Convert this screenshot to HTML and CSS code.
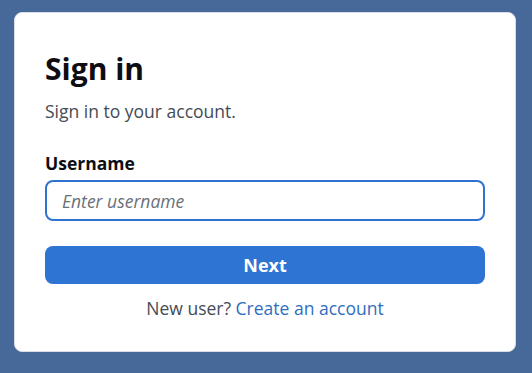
FILE: index.html
```html
<!DOCTYPE html>
<html lang="en">
<head>
    <meta charset="UTF-8">
    <meta name="viewport" content="width=device-width, initial-scale=1.0">
    <title>Sign in</title>
    <link rel="stylesheet" href="styles.css">
</head>
<body>
    <div class="login-card">
        <h1 class="login-header">Sign in</h1>
        <p class="login-text">Sign in to your account.</p>
        <form class="login-form">
            <label for="username">Username</label>
            <input type="text" id="username" class="input-field" placeholder="Enter username">
            <button type="button" class="submit-button">Next</button>
        </form>
        <p class="signup-text">New user? <a href="#">Create an account</a></p>
    </div>
</body>
</html>
```

FILE: styles.css
```css
body {
    margin: 0;
    padding: 12px 16px 0 14px;
    background-color: #46699a;
    font-family: "Open Sans", sans-serif;
    color: #1a1a1a;
}

/* card ============================================================ */

.login-card {
    background-color: #fff;
    border: 1px solid #d8dde6;
    border-radius: 8px;
    padding: 36px 30px 0 30px;
    height: 340px;
    box-sizing: border-box;
}

.login-header {
    margin: 0;
    font-size: 30px;
    font-weight: 700;
    line-height: 40px;
    color: #0d0d12;
}

.login-text {
    margin: 10px 0 0 0;
    font-size: 17.5px;
    line-height: 24px;
    color: #454b55;
}

/* form ============================================================ */

.login-form {
    display: flex;
    flex-direction: column;
    margin-top: 28px;
}

.login-form label {
    font-weight: 700;
    font-size: 17.5px;
    line-height: 24px;
    color: #0d0d12;
    margin-bottom: 5px;
}

.input-field {
    height: 41px;
    box-sizing: border-box;
    padding: 0 15px;
    border: 2px solid #2f73d0;
    border-radius: 8px;
    font-family: "Open Sans", sans-serif;
    font-size: 17.5px;
    outline: none;
}

.input-field::placeholder {
    font-style: italic;
    color: #6b7078;
}

.submit-button {
    margin-top: 25px;
    height: 38px;
    border: none;
    border-radius: 8px;
    background-color: #2e74d2;
    color: #fff;
    font-family: "Open Sans", sans-serif;
    font-size: 18px;
    font-weight: 700;
    cursor: pointer;
}

.signup-text {
    margin: 12px 0 0 0;
    text-align: center;
    font-size: 17.5px;
    line-height: 24px;
    color: #454b55;
}

.signup-text a {
    color: #2f6ebf;
    text-decoration: none;
}
```
